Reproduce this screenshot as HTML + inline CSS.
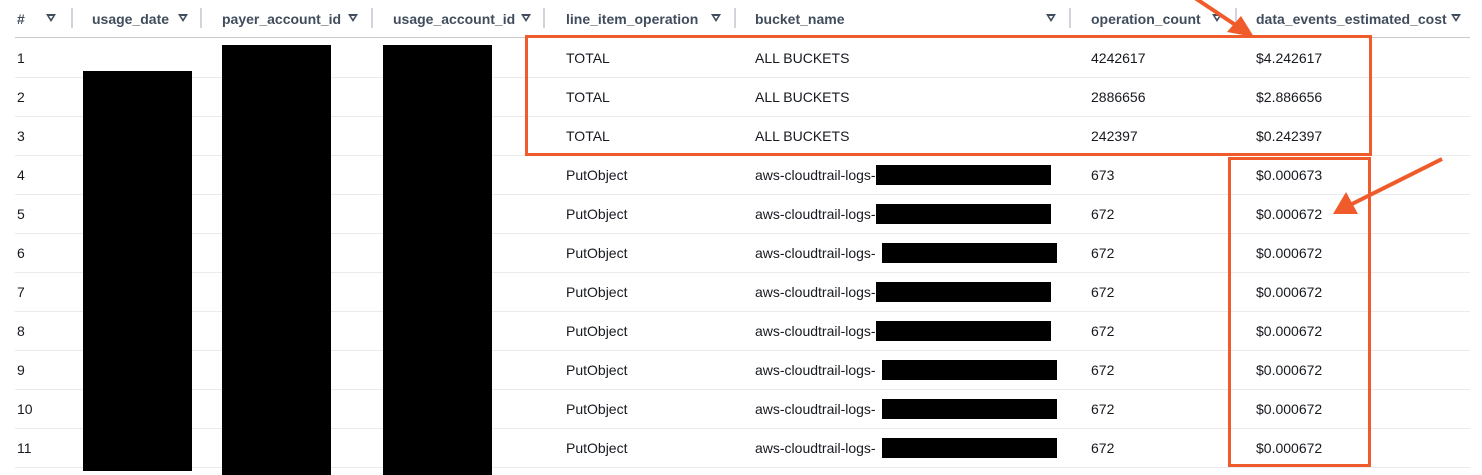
<!DOCTYPE html>
<html><head><meta charset="utf-8"><style>
body{margin:0;width:1482px;height:469px;background:#fff;position:relative;overflow:hidden;font-family:"Liberation Sans",sans-serif;font-size:14px;color:#16191f}
.t{position:absolute;white-space:nowrap;line-height:16px}
.h{font-weight:bold;color:#414d5c;top:11px}
.tri{position:absolute;top:14px;width:0;height:0;border-left:5px solid transparent;border-right:5px solid transparent;border-top:8px solid #414d5c}
.tri:after{content:"";position:absolute;left:-2px;top:-6px;border-left:2px solid transparent;border-right:2px solid transparent;border-top:3px solid #fff}
.dv{position:absolute;top:8px;width:2px;height:20px;background:#d1d5db}
.ln{position:absolute;left:15px;width:1455px;height:1px;background:#e9ebed}
.bk{position:absolute;background:#000}
.ob{position:absolute;border:3px solid #ef5b2a;box-sizing:border-box}
</style></head><body>
<div class="t h" style="left:17px">#</div><div class="tri" style="left:46px"></div><div class="dv" style="left:71px"></div>
<div class="t h" style="left:92px">usage_date</div><div class="tri" style="left:178px"></div><div class="dv" style="left:200px"></div>
<div class="t h" style="left:222px">payer_account_id</div><div class="tri" style="left:348px"></div><div class="dv" style="left:371px"></div>
<div class="t h" style="left:393px">usage_account_id</div><div class="tri" style="left:521px"></div><div class="dv" style="left:543px"></div>
<div class="t h" style="left:566px">line_item_operation</div><div class="tri" style="left:711px"></div><div class="dv" style="left:734px"></div>
<div class="t h" style="left:755px">bucket_name</div><div class="tri" style="left:1046px"></div><div class="dv" style="left:1069px"></div>
<div class="t h" style="left:1091px">operation_count</div><div class="tri" style="left:1212px"></div><div class="dv" style="left:1235px"></div>
<div class="t h" style="left:1256px">data_events_estimated_cost</div><div class="tri" style="left:1451px"></div>
<div class="ln" style="top:37px;background:#c6c9cd"></div>
<div id="rows"></div>
<script>
var d=[["TOTAL","ALL BUCKETS","4242617","$4.242617"],["TOTAL","ALL BUCKETS","2886656","$2.886656"],["TOTAL","ALL BUCKETS","242397","$0.242397"],["PutObject","aws-cloudtrail-logs-","673","$0.000673"]];
for(var i=0;i<7;i++)d.push(["PutObject","aws-cloudtrail-logs-","672","$0.000672"]);
var rx=[0,0,0,876,876,882,876,876,882,882,882],h="";
for(var i=0;i<11;i++){var y=50+39*i;
h+='<div class="t" style="left:17px;top:'+y+'px">'+(i+1)+'</div>';
h+='<div class="t" style="left:566px;top:'+y+'px">'+d[i][0]+'</div>';
h+='<div class="t" style="left:755px;top:'+y+'px">'+d[i][1]+'</div>';
h+='<div class="t" style="left:1091px;top:'+y+'px">'+d[i][2]+'</div>';
h+='<div class="t" style="left:1256px;top:'+y+'px">'+d[i][3]+'</div>';
h+='<div class="ln" style="top:'+(77+39*i)+'px"></div>';
if(i>=3)h+='<div class="bk" style="left:'+rx[i]+'px;top:'+(y-2)+'px;width:175px;height:20px"></div>';}
document.getElementById("rows").innerHTML=h;
</script>
<div class="bk" style="left:83px;top:71px;width:109px;height:400px"></div>
<div class="bk" style="left:222px;top:45px;width:109px;height:430px"></div>
<div class="bk" style="left:383px;top:45px;width:109px;height:430px"></div>
<div class="ob" style="left:525px;top:35px;width:847px;height:121px"></div>
<div class="ob" style="left:1228px;top:157px;width:143px;height:310px"></div>
<svg style="position:absolute;left:0;top:0" width="1482" height="469">
<line x1="1195" y1="-2" x2="1240" y2="28" stroke="#ef5b2a" stroke-width="4"/>
<polygon points="1254,37 1227,32 1241,16" fill="#ef5b2a"/>
<line x1="1442" y1="159" x2="1352" y2="204" stroke="#ef5b2a" stroke-width="4"/>
<polygon points="1333,214 1346,192 1358,214" fill="#ef5b2a"/>
</svg>
</body></html>
